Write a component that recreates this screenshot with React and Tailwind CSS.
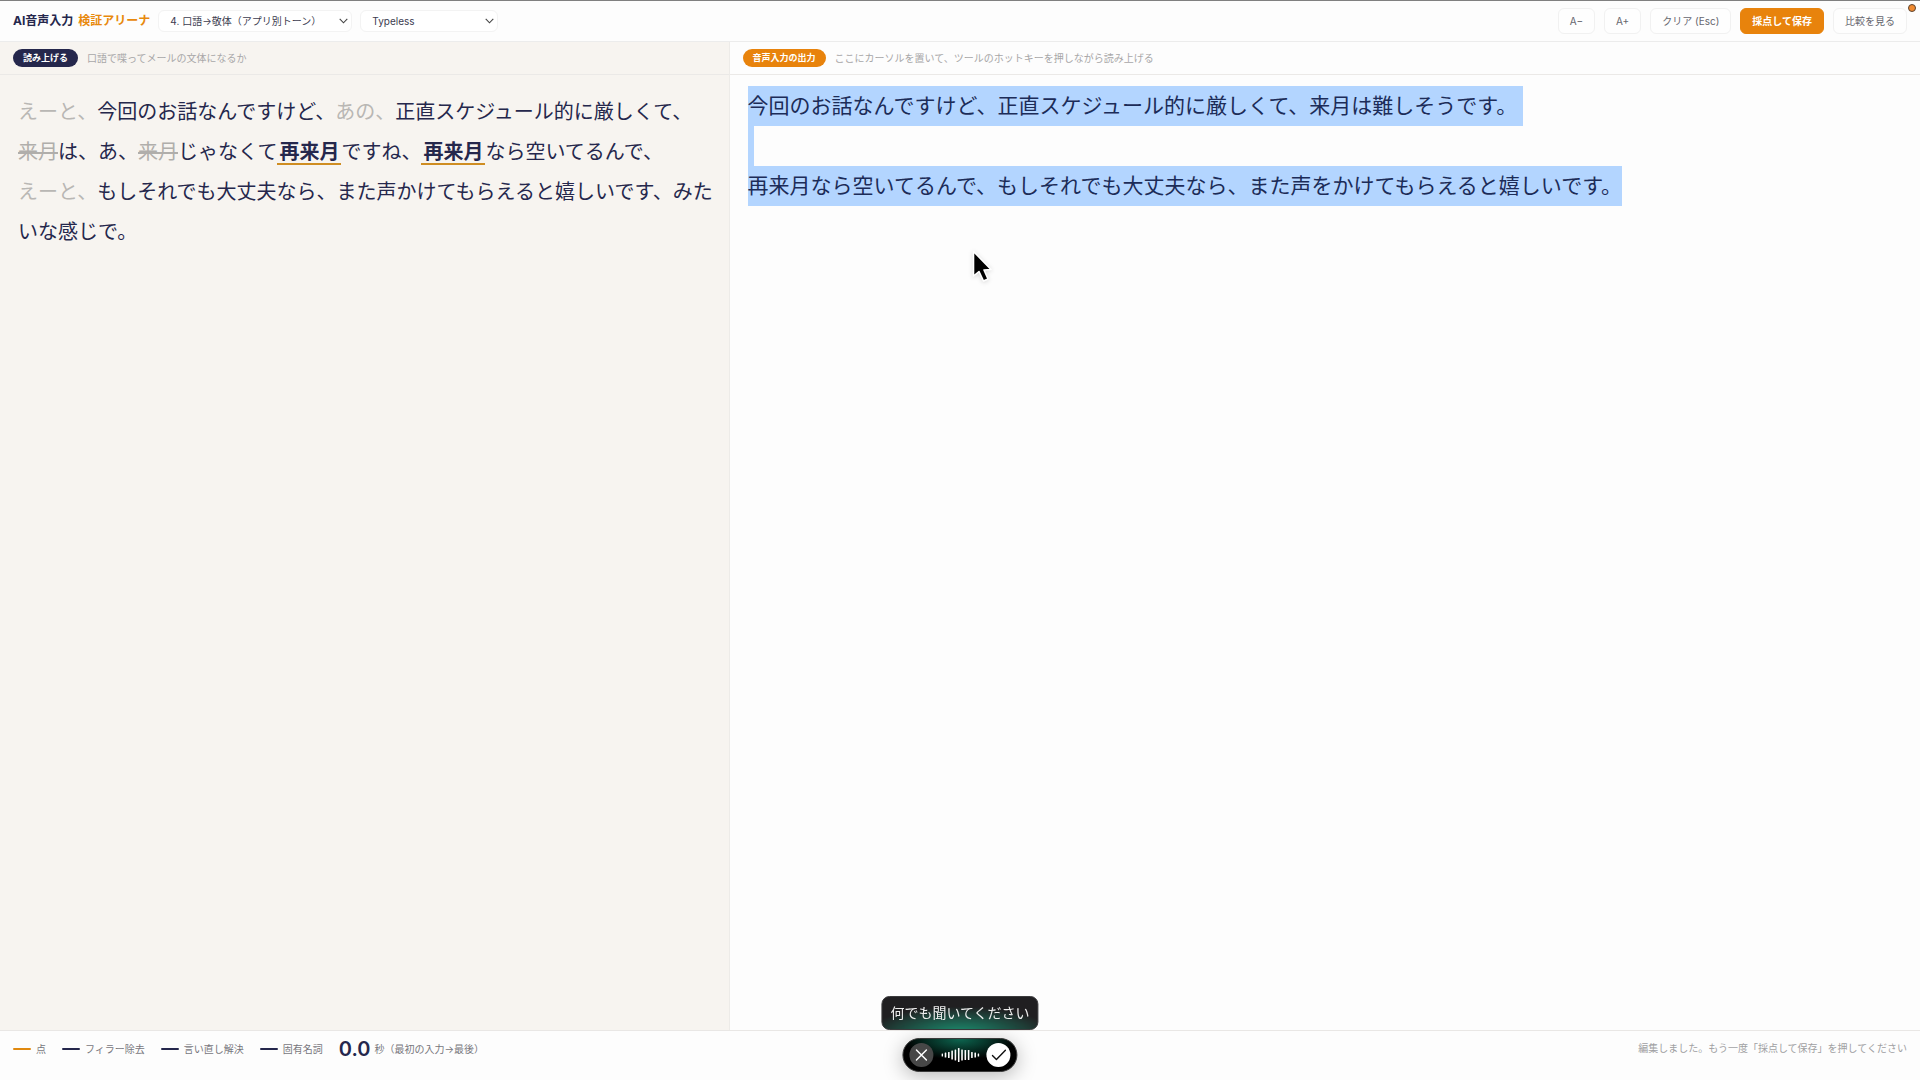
import React, { useEffect, useRef } from 'react'

const output = `今回のお話なんですけど、正直スケジュール的に厳しくて、来月は難しそうです。

再来月なら空いてるんで、もしそれでも大丈夫なら、また声をかけてもらえると嬉しいです。`

const scores = [
  { label: '点', color: 'bg-[#e0890f]' },
  { label: 'フィラー除去', color: 'bg-[#25274c]' },
  { label: '言い直し解決', color: 'bg-[#25274c]' },
  { label: '固有名詞', color: 'bg-[#25274c]' },
]

const bars = [3, 5, 6, 9, 11, 14, 11, 10, 10, 6, 5, 3]

function Select({ label, className, children }) {
  return (
    <div className={`relative ${className}`}>
      <select aria-label={label} className="block h-[22px] w-full appearance-none rounded-md border border-[#f3f3f3] bg-white pl-[11px] pr-6 text-[10px] text-[#3c3c50]">
        {children}
      </select>
      <svg className="pointer-events-none absolute right-1 top-2 h-[6px] w-[9px]" viewBox="0 0 9 6" fill="none" stroke="#444" strokeWidth="1.1">
        <path d="M0.7 0.8 L4.5 4.8 L8.3 0.8" />
      </svg>
    </div>
  )
}

function Button({ className = 'border-[#f1f1f1] bg-[#fefefe] text-[#66666e]', children }) {
  return (
    <button type="button" className={`h-[26px] rounded-md border px-[11px] text-[10px] whitespace-nowrap ${className}`}>
      {children}
    </button>
  )
}

function Filler({ children }) {
  return <span className="text-[#b9b7b4]">{children}</span>
}

function Removed({ children }) {
  return <del className="text-[#b0aeab] line-through">{children}</del>
}

function Term({ children }) {
  return <strong className="inline-block border-b-2 border-[#cf8d22] px-0.5 font-bold leading-[22px]">{children}</strong>
}

function PaneHead({ badge, badgeColor, hint }) {
  return (
    <div className="flex h-[33px] items-center gap-[9px] border-b border-[#ebe9e7] px-[13px]">
      <h2 className={`flex h-[18px] items-center rounded-full px-[10px] text-[9px] font-bold text-white ${badgeColor}`}>{badge}</h2>
      <p className="text-[10px] text-[#a8a7a8]">{hint}</p>
    </div>
  )
}

function VoicePopup() {
  return (
    <div className="fixed bottom-2 left-1/2 flex -translate-x-1/2 flex-col items-center gap-2">
      <div className="flex h-[34px] items-center rounded-lg border border-[#3b3b3d] bg-[#201f21] bg-[radial-gradient(ellipse_60%_85%_at_50%_115%,#1c9474,transparent)] px-2 text-sm text-[#eeeeee] whitespace-nowrap">
        何でも聞いてください
      </div>
      <div className="flex h-[34px] w-[115px] items-center justify-between rounded-full border border-[#3a3a3a] bg-black bg-[radial-gradient(ellipse_50%_65%_at_50%_0%,#0d6650,transparent)] px-[6px] shadow-[0_4px_20px_rgba(0,0,0,0.28)]">
        <button type="button" aria-label="キャンセル" className="flex size-6 items-center justify-center rounded-full bg-[#474747]">
          <svg className="size-3" viewBox="0 0 12 12" stroke="#fff" strokeWidth="1.5" strokeLinecap="round">
            <path d="M1 1 L11 11 M11 1 L1 11" />
          </svg>
        </button>
        <svg className="h-4 w-[38px]" viewBox="0 0 38 16" fill="#fff">
          {bars.map((h, i) => (
            <rect key={i} x={i * 3.3} y={8 - h / 2} width="1.6" height={h} rx="0.5" />
          ))}
        </svg>
        <button type="button" aria-label="確定" className="flex size-6 items-center justify-center rounded-full bg-white">
          <svg className="h-3 w-[15px]" viewBox="0 0 15 12" fill="none" stroke="#111" strokeWidth="1.4" strokeLinecap="round" strokeLinejoin="round">
            <path d="M1 6.5 L5 10.5 L14 1.2" />
          </svg>
        </button>
      </div>
    </div>
  )
}

function App() {
  const outputRef = useRef(null)

  useEffect(() => {
    outputRef.current.focus()
    outputRef.current.select()
  }, [])

  return (
    <div lang="ja" className="flex h-screen flex-col overflow-hidden bg-[#fdfdfd] font-['Inter','Noto_Sans_CJK_JP',sans-serif] text-[#25274c]">
      <header className="flex h-[42px] shrink-0 items-center border-t border-b border-t-[#808080] border-b-[#ececec] px-[13px]">
        <h1 className="flex gap-[5px] text-xs font-bold whitespace-nowrap">
          AI音声入力 <span className="text-[#e8890c]">検証アリーナ</span>
        </h1>
        <Select label="テスト項目" className="ml-2 w-[194px]">
          <option>4. 口語→敬体（アプリ別トーン）</option>
        </Select>
        <Select label="ツール" className="ml-2 w-[138px]">
          <option>Typeless</option>
        </Select>
        <div className="ml-auto flex items-center gap-[9px]">
          <Button>A−</Button>
          <Button>A+</Button>
          <Button>クリア (Esc)</Button>
          <Button className="border-[#e8830c] bg-[#e8830c] font-bold text-white">採点して保存</Button>
          <Button>比較を見る</Button>
        </div>
      </header>

      <main className="flex min-h-0 flex-1">
        <section className="w-[38%] border-r border-[#edebe8] bg-[#f7f4f0]">
          <PaneHead badge="読み上げる" badgeColor="bg-[#25274c]" hint="口語で喋ってメールの文体になるか" />
          <p className="px-[18px] pt-[17px] text-xl leading-[40px] whitespace-nowrap">
            <Filler>えーと、</Filler>今回のお話なんですけど、<Filler>あの、</Filler>正直スケジュール的に厳しくて、<br />
            <Removed>来月</Removed>は、あ、<Removed>来月</Removed>じゃなくて<Term>再来月</Term>ですね、<Term>再来月</Term>なら空いてるんで、<br />
            <Filler>えーと、</Filler>もしそれでも大丈夫なら、また声かけてもらえると嬉しいです、みた<br />
            いな感じで。
          </p>
        </section>
        <section className="flex flex-1 flex-col">
          <PaneHead badge="音声入力の出力" badgeColor="bg-[#e8830c]" hint="ここにカーソルを置いて、ツールのホットキーを押しながら読み上げる" />
          <textarea
            ref={outputRef}
            aria-label="音声入力の出力"
            spellCheck={false}
            defaultValue={output}
            className="w-full flex-1 resize-none bg-transparent px-[18px] pt-[11px] text-[21px] leading-[40px] outline-none selection:bg-[#b3d5ff] selection:text-[#1c2c58]"
          />
        </section>
      </main>

      <footer className="flex h-[50px] shrink-0 items-start border-t border-[#e9e7e5] px-[13px] pt-1">
        <div className="flex items-center gap-4 text-[10px] text-[#77767c]">
          {scores.map((s) => (
            <div key={s.label} className="flex items-center gap-[5px]">
              <span className={`h-[2px] w-[18px] rounded-full ${s.color}`} />
              {s.label}
            </div>
          ))}
          <div className="flex items-center gap-1 leading-7">
            <span className="text-xl font-semibold leading-7 text-[#25274c]">0.0</span>
            秒（最初の入力→最後）
          </div>
        </div>
        <p className="ml-auto pt-[6px] text-[10px] text-[#a0a0a2]">編集しました。もう一度「採点して保存」を押してください</p>
      </footer>

      <span className="fixed right-1 top-1 size-2 rounded-full border border-[#5a4433] bg-[#f08a30]" />
      <VoicePopup />
      <svg className="pointer-events-none fixed left-[972px] top-[250px] h-8 w-5 drop-shadow-sm" viewBox="0 0 20 32">
        <path d="M1.5 1.5 L1.5 26 L7 21.5 L11.5 31 L16 29 L12 20 L19 19.5 Z" fill="#000" stroke="#fff" strokeWidth="1.6" strokeLinejoin="round" />
      </svg>
    </div>
  )
}

export default App
